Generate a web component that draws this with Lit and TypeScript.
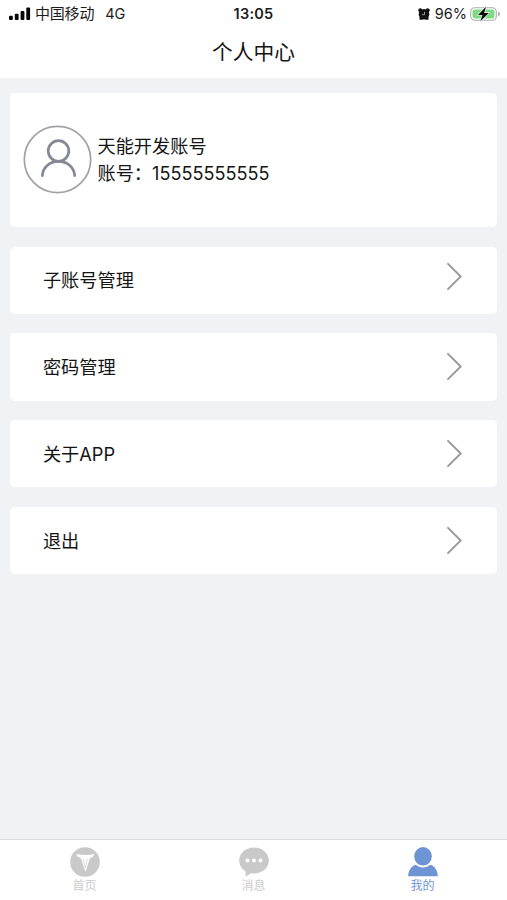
import { LitElement, html, css, svg } from "lit";
import { customElement, property } from "lit/decorators.js";
import { classMap } from "lit/directives/class-map.js";

@customElement("status-bar")
class StatusBar extends LitElement {
  static styles = css`
    :host { display: grid; grid-template-columns: 1fr auto 1fr; align-items: center; height: 28px; padding: 0 6px 0 9px; color: #1c1c1c; font-size: 15px; line-height: 28px; }
    .side { display: flex; align-items: center; }
    .signal { width: 22px; height: 14px; margin-right: 4px; }
    .carrier { letter-spacing: -0.2px; margin-right: 11px; }
    .network { font-size: 14.5px; }
    .time { font-weight: 600; font-size: 14.5px; letter-spacing: 0.25px; margin-right: 3px; }
    .right { justify-content: flex-end; }
    .alarm { width: 14px; height: 14px; margin-right: 4px; }
    .percent { font-size: 14.5px; margin-right: 3px; }
    .battery { width: 31px; height: 16px; margin-top: -1px; }
  `;
  render() {
    return html`
      <div class="side">
        <svg class="signal" viewBox="0 0 22 14">
          <g fill="#080808">
            <rect x="0" y="8.7" width="3.8" height="4.3" rx="1" />
            <rect x="5.8" y="6.7" width="3.8" height="6.3" rx="1" />
            <rect x="11.6" y="4" width="3.8" height="9" rx="1" />
            <rect x="17.3" y="0.6" width="3.8" height="12.4" rx="1" />
          </g>
        </svg>
        <span class="carrier">中国移动</span><span class="network">4G</span>
      </div>
      <span class="time">13:05</span>
      <div class="side right">
        <svg class="alarm" viewBox="0 0 14 14">
          <g fill="#111">
            <circle cx="7" cy="7.3" r="5.3" />
            <circle cx="3.3" cy="3.2" r="2" />
            <circle cx="10.7" cy="3.2" r="2" />
            <path d="M2.5 10h3v2.800h-3zM8.500 10h3v2.800h-3z" />
          </g>
          <path d="M7.5 4.8v2.900H5" fill="none" stroke="#bbb" stroke-width="0.8" />
        </svg>
        <span class="percent">96%</span>
        <svg class="battery" viewBox="0 0 31 16">
          <rect x="0.7" y="1.7" width="25.6" height="12.6" rx="4" fill="#fff" stroke="#a9adaa" stroke-width="1.1" />
          <rect x="2.5" y="3.4" width="22" height="9.2" rx="2.5" fill="#7edb83" />
          <path d="M28 5.5q2 .7 2 2.5t-2 2.5z" fill="#a9adaa" />
          <path d="M16 .8 8 8.9h4.5L10.3 15.2 18.8 7h-4.7z" fill="#080808" stroke="#e9f7ea" stroke-width="1.3" paint-order="stroke" />
        </svg>
      </div>
    `;
  }
}

@customElement("menu-row")
class MenuRow extends LitElement {
  @property() label = "";
  @property({ type: Boolean, reflect: true }) raised = false;
  static styles = css`
    :host { display: flex; align-items: center; justify-content: space-between; box-sizing: border-box; height: 67.2px; padding: 0 34px 0 32.500px; border-radius: 5px; background: #fff; color: #151515; font-size: 18.2px; line-height: 26px; }
    .chevron { width: 17px; height: 29px; }
    :host([raised]) .chevron { margin-bottom: 7px; }
  `;
  render() {
    return html`
      <span>${this.label}</span>
      <svg class="chevron" viewBox="0 0 17 29">
        <path d="M2 1.800 14.700 14.500 2 27.200" fill="none" stroke="#999" stroke-width="1.900" stroke-linejoin="round" stroke-linecap="round" />
      </svg>
    `;
  }
}

const tabs = [
  {
    label: "首页",
    active: false,
    icon: svg`
      <circle cx="16" cy="16" r="14.8" fill="#c9c9c9" />
      <path d="M7.300 8q9 2 18 0l-.8 2.300-3.700 2.200L16.500 26 12 12.500l-3.800-2.200z" fill="#fff" />
      <path d="M14.200 12.500 16.400 22l2-9.500" fill="none" stroke="#d2d2d2" stroke-width="0.8" />
    `,
  },
  {
    label: "消息",
    active: false,
    icon: svg`
      <path d="M16 1.600c8.400 0 14.800 5.800 14.800 13S24.400 27.600 16 27.600q-1.800 0-3.400-.4-2.300 2.600-5.400 3.200.9-2.500.2-5.200C3.700 22.900 1.200 19.100 1.200 14.600 1.200 7.400 7.600 1.600 16 1.600z" fill="#c9c9c9" />
      <g fill="#fff"><circle cx="9.500" cy="14.500" r="2" /><circle cx="16" cy="14.500" r="2" /><circle cx="22.500" cy="14.500" r="2" /></g>
    `,
  },
  {
    label: "我的",
    active: true,
    icon: svg`
      <ellipse cx="16" cy="10.300" rx="8.800" ry="9.300" fill="#6f94d5" />
      <path d="M1.200 30.300C1.300 24.300 4.500 20 8.600 18.800q3.300 2.700 7.400 2.700t7.400-2.700c4.100 1.200 7.300 5.500 7.400 11.500z" fill="#6f94d5" />
    `,
  },
];

@customElement("tab-bar")
class TabBar extends LitElement {
  static styles = css`
    :host { display: grid; grid-template-columns: repeat(3, 1fr); box-sizing: border-box; height: 61px; border-top: 1.5px solid #dcdcde; background: #fff; }
    .tab { display: flex; flex-direction: column; align-items: center; padding-top: 6px; color: #cbcbcb; font-size: 12px; line-height: 16px; }
    .active { color: #6f94d5; }
    .icon { width: 32px; height: 32px; }
  `;
  render() {
    return tabs.map(
      (t) => html`
        <div class=${classMap({ tab: true, active: t.active })}>
          <svg class="icon" viewBox="0 0 32 32">${t.icon}</svg>
          <span>${t.label}</span>
        </div>
      `
    );
  }
}

@customElement("app-root")
class AppRoot extends LitElement {
  static styles = css`
    :host { display: flex; flex-direction: column; height: 900px; overflow: hidden; background: #f1f2f6; font-family: Inter, "Noto Sans CJK SC", sans-serif; }
    header { height: 78px; background: #fff; }
    h1 { margin: 0; padding-top: 9px; text-align: center; font-size: 20.7px; font-weight: 400; line-height: 32px; color: #151515; }
    main { flex: 1; display: flex; flex-direction: column; gap: 19.6px; padding: 14.5px 10px 0 10.4px; }
    .profile { display: flex; align-items: center; box-sizing: border-box; height: 134.5px; padding-left: 12.6px; border-radius: 5px; background: #fff; }
    .avatar { width: 69px; height: 69px; margin-right: 5.5px; }
    .info { font-size: 18.2px; line-height: 27px; color: #151515; }
    .number { font-size: 18.1px; }
  `;
  render() {
    return html`
      <header>
        <status-bar></status-bar>
        <h1>个人中心</h1>
      </header>
      <main>
        <section class="profile">
          <svg class="avatar" viewBox="0 0 69 69">
            <g fill="none">
              <circle cx="34.500" cy="34.500" r="33.200" stroke="#a1a2a5" stroke-width="1.700" />
              <g stroke="#868896" stroke-width="2.700">
                <circle cx="35.500" cy="26" r="10.300" />
                <path d="M19.300 50.700C19.800 42.500 26.500 36.300 35.500 36.300S51.200 42.500 51.700 50.700" stroke-linecap="round" />
              </g>
            </g>
          </svg>
          <div class="info">
            <div>天能开发账号</div>
            <div>账号：<span class="number">15555555555</span></div>
          </div>
        </section>
        <menu-row label="子账号管理" raised></menu-row>
        <menu-row label="密码管理"></menu-row>
        <menu-row label="关于APP"></menu-row>
        <menu-row label="退出"></menu-row>
      </main>
      <tab-bar></tab-bar>
    `;
  }
}
